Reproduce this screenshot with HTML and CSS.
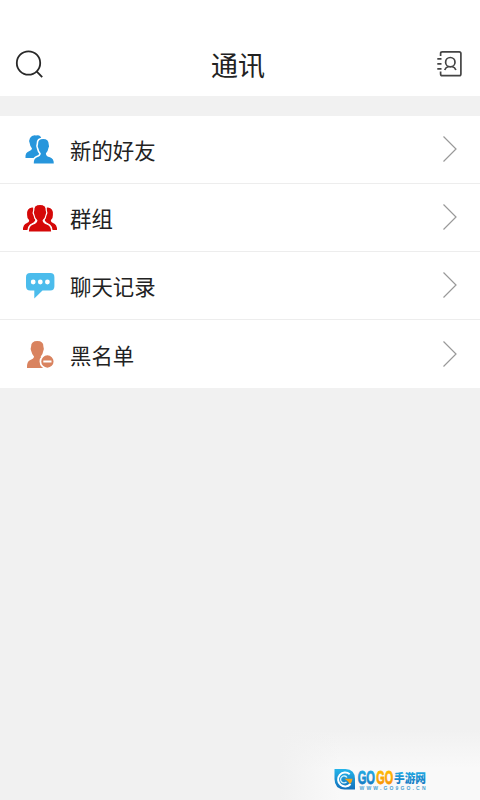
FILE: index.html
```html
<!DOCTYPE html>
<html lang="zh-CN">
<head>
<meta charset="utf-8">
<title>通讯</title>
<link rel="stylesheet" href="styles.css">
</head>
<body>
<header class="header">
  <svg class="search" viewBox="0 0 30 30"><circle cx="13.5" cy="13" r="11.7"/><path d="M21.6 21.3l5.6 5.8"/></svg>
  <h1 class="title">通讯</h1>
  <svg class="contacts" viewBox="0 0 28 30"><path d="M4.6 7V4.5Q4.6 2.8 6.3 2.8H23.2Q24.9 2.8 24.9 4.5V25Q24.9 26.7 23.2 26.7H6.3Q4.6 26.7 4.6 25V22.5M1.3 9.8H5.5M1.3 14.8H5.5M1.3 19.8H5.5"/><circle cx="14.3" cy="13.2" r="4.7"/><path d="M8.7 21Q9.6 18.3 12.6 17.5M16 17.5Q19 18.3 19.9 21"/></svg>
</header>
<main class="list">
  <div class="row">
    <svg class="icon" viewBox="0 0 36 36"><g fill="#2796dc"><path d="M3.5 26Q3 20.5 7 19.2Q10 18.4 10 16.6Q8 14.5 7.7 11.3Q6.5 8.7 8 6Q10 2.8 14 3.5Q18.7 2.3 19.4 7Q20.2 10 18.5 13L17 26Z"/><path stroke="#fff" stroke-width="1.6" d="M11 32.2Q10.6 26.2 14.3 24.7Q18 23.7 18 21.5Q16.2 19.5 15.6 16.5Q14.3 14.4 15.3 12.1Q15.1 6.2 21.2 6.2Q27.4 6.2 27.5 12.3Q28.4 14.2 27.1 16.5Q26.7 19.5 24.7 21.5Q24.7 23.7 28.2 24.6Q32.8 26 32.6 32.2Z"/></g></svg>
    <span class="label">新的好友</span>
    <svg class="arrow" viewBox="0 0 16 28"><path d="M1.5 1.5L14 14L1.5 26.5"/></svg>
  </div>
  <div class="row">
    <svg class="icon" viewBox="0 0 36 36"><g fill="#d50808"><path d="M1 30Q.8 24.5 5 23Q7.3 22.2 7.2 20.3Q4.8 17.8 5.1 15Q4.4 8 10 7.5Q12 7.3 13 9Q11 12 12 16Q12 18 13.3 20Q13 22 8 24.5Q6 26 5.5 30ZM35 30Q35.2 24.5 31 23Q28.7 22.2 28.8 20.3Q31.2 17.8 30.9 15Q31.6 8 26 7.5Q24 7.3 23 9Q25 12 24 16Q24 18 22.7 20Q23 22 28 24.5Q30 26 30.5 30Z"/><path stroke="#fff" stroke-width="1.2" d="M6.2 32Q6.3 26 10.4 24.3Q14.7 22.8 14.8 20.5Q12.4 18.2 11.9 15Q10.6 12.5 11.7 10.5Q11.4 4.4 18 4.4Q24.6 4.4 24.3 10.5Q25.4 12.5 24.1 15Q23.6 18.2 21.2 20.5Q21.3 22.8 25.6 24.3Q29.7 26 29.8 32Z"/></g></svg>
    <span class="label">群组</span>
    <svg class="arrow" viewBox="0 0 16 28"><path d="M1.5 1.5L14 14L1.5 26.5"/></svg>
  </div>
  <div class="row">
    <svg class="icon" viewBox="0 0 36 36"><path fill="#4bbcec" d="M8.2 5H28.3Q32.4 5 32.4 9.2V18.3Q32.4 22.5 28.3 22.5H20.5L12.3 30.5V22.5H8.2Q4 22.5 4 18.3V9.2Q4 5 8.2 5Z"/><g fill="#fff"><circle cx="11.2" cy="14" r="2.4"/><circle cx="18.3" cy="14" r="2.4"/><circle cx="25.4" cy="14" r="2.4"/></g></svg>
    <span class="label">聊天记录</span>
    <svg class="arrow" viewBox="0 0 16 28"><path d="M1.5 1.5L14 14L1.5 26.5"/></svg>
  </div>
  <div class="row">
    <svg class="icon" viewBox="0 0 36 36"><path fill="#d9835f" d="M5 31Q4.6 24.5 8.3 23Q12 21.6 12 19.5Q10 17.5 9.3 14.3Q8.1 11.8 9.1 9.5Q9.1 4 15.3 4Q21.6 4 21.4 9.5Q22.4 11.8 21.2 14.3Q20.8 17.5 18.7 19.5Q18.5 21 22 22.5V31Z"/><circle cx="25.4" cy="24.5" r="7" fill="#d9835f" stroke="#fff" stroke-width="1.7"/><path stroke="#fff" stroke-width="2" d="M21.3 24.5H29.5"/></svg>
    <span class="label">黑名单</span>
    <svg class="arrow" viewBox="0 0 16 28"><path d="M1.5 1.5L14 14L1.5 26.5"/></svg>
  </div>
</main>
<footer class="footer">
  <svg class="brand" viewBox="0 0 96 26">
    <defs>
      <linearGradient id="blue" x2="0" y2="1"><stop stop-color="#24b5ea"/><stop offset="1" stop-color="#126fbb"/></linearGradient>
      <linearGradient id="gold" x2="0" y2="1"><stop stop-color="#ffc400"/><stop offset="1" stop-color="#f68a09"/></linearGradient>
    </defs>
    <path fill="url(#blue)" d="M.5 1H11.5Q21 1.5 21 11V21.5H10.5Q.5 21 .5 11Z"/>
    <path fill="none" stroke="#fff" stroke-width="2" d="M15.7 6.2A7 7 0 1 0 16.5 16"/>
    <path fill="none" stroke="#d9f3fb" stroke-width="1.3" d="M13 9.5A3.5 3.5 0 1 0 12.5 14"/>
    <path fill="#f6a21b" d="M10.5 10.7H18.5Q18.2 14.2 16 16L13.5 13Z"/>
    <text class="latin" x="23.7" y="16.2" textLength="17.3" lengthAdjust="spacingAndGlyphs" fill="url(#blue)" stroke="url(#blue)">GO</text>
    <text class="latin" x="42.2" y="16.2" textLength="17" lengthAdjust="spacingAndGlyphs" fill="url(#gold)" stroke="url(#gold)">GO</text>
    <text class="han" x="60" y="15.2" textLength="32" lengthAdjust="spacingAndGlyphs" fill="url(#blue)">手游网</text>
    <text class="site" x="25.5" y="22" textLength="66">WWW.GO9GO.CN</text>
  </svg>
</footer>
</body>
</html>
```
FILE: styles.css
```css
* { box-sizing: border-box; }
body {
  margin: 0;
  height: 800px;
  display: flex;
  flex-direction: column;
  overflow: hidden;
  background: #f1f1f1;
  color: #222;
  font-family: "Noto Sans CJK SC", sans-serif;
}
svg { display: block; flex: none; }
.header {
  height: 96px;
  padding: 34px 16px 0 15px;
  display: flex;
  align-items: center;
  justify-content: space-between;
  background: #fff;
}
.search, .contacts { fill: none; stroke: #282828; stroke-width: 1.8; }
.search { width: 30px; height: 30px; margin-bottom: 1px; }
.contacts { width: 28px; height: 30px; stroke: #444; stroke-width: 1.7; margin-bottom: 2px; }
.title { margin: 0 5px 1px 0; font-size: 27px; line-height: 40px; font-weight: 400; }
.list { margin-top: 20px; background: #fff; }
.row {
  height: 68px;
  padding: 0 22px 1px;
  display: flex;
  align-items: center;
  border-bottom: 1px solid #ededed;
}
.row:last-child { border-bottom: 0; }
.icon { width: 36px; height: 36px; margin-top: 2px; }
.label { margin-left: 12px; flex: 1; font-size: 21.4px; line-height: 32px; padding-top: 2px; }
.arrow { width: 16px; height: 28px; fill: none; stroke: #999; stroke-width: 1.2; }
.footer {
  width: 200px;
  height: 70px;
  margin: auto 0 0 auto;
  padding: 38px 0 0 54px;
  background: linear-gradient(90deg, #f1f1f1, rgba(241, 241, 241, 0) 30%), linear-gradient(#f1f1f1, #f9f9f9 55%);
}
.brand { width: 96px; height: 26px; }
.latin { font: 700 18.5px "Liberation Sans", sans-serif; stroke-width: .8; }
.han { font: 900 12px "Noto Sans CJK SC", sans-serif; }
.site { font: 700 5px "Liberation Sans", sans-serif; fill: #4aa2d2; }
```
